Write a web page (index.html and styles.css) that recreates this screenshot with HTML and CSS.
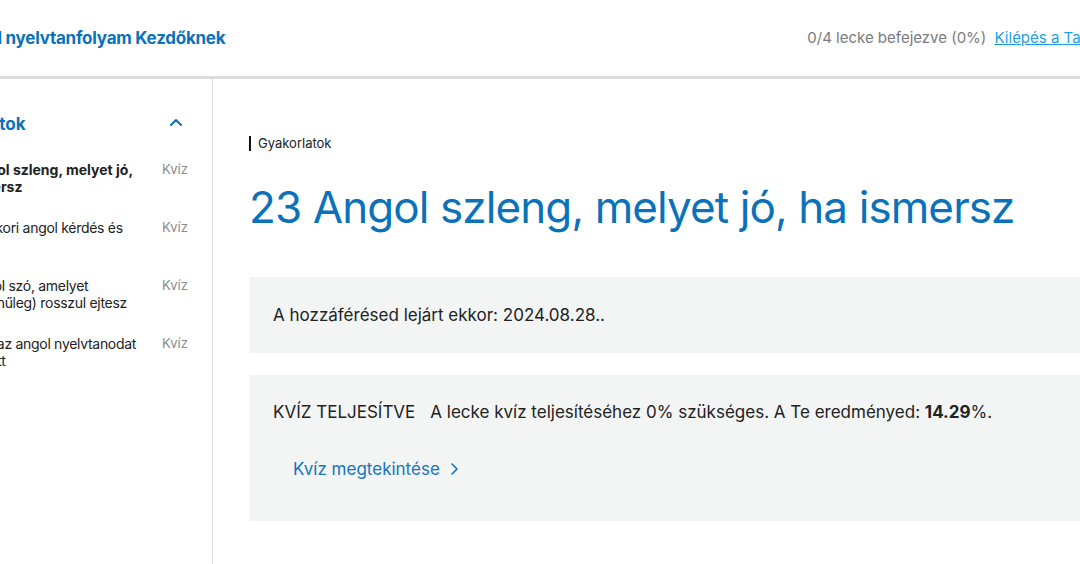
FILE: index.html
```html
<!DOCTYPE html>
<html lang="hu">
<head>
    <meta charset="UTF-8">
    <meta name="viewport" content="width=device-width, initial-scale=1.0">
    <title>23 Angol szleng, melyet jó, ha ismersz</title>
    <link rel="stylesheet" href="styles.css">
</head>
<body>

    <div class="page">
        <!-- Course header -->
        <header class="course-header">
            <div class="course-title">Angol nyelvtanfolyam Kezdőknek</div>
            <div class="course-progress">
                <span class="progress-text">0/4 lecke befejezve (0%)</span>
                <a href="#" class="exit-link">Kilépés a Tanfolyamból</a>
            </div>
        </header>

        <div class="layout">
            <!-- Lesson list -->
            <aside class="sidebar">
                <div class="section-head">
                    <span class="section-title">Gyakorlatok</span>
                    <svg class="chevron-up" width="14" height="8" viewBox="0 0 14 8">
                        <path d="M2 7 L7 2 L12 7" fill="none" stroke="#0b72b9" stroke-width="2" stroke-linecap="round" stroke-linejoin="round"/>
                    </svg>
                </div>
                <ul class="lessons">
                    <li class="lesson active">
                        <span class="lesson-name">23 Angol szleng, melyet jó, ha ismersz</span>
                        <span class="lesson-type">Kvíz</span>
                    </li>
                    <li class="lesson">
                        <span class="lesson-name">Mindenkori angol kérdés és válasz</span>
                        <span class="lesson-type">Kvíz</span>
                    </li>
                    <li class="lesson">
                        <span class="lesson-name">25 Angol szó, amelyet (valószínűleg) rosszul ejtesz</span>
                        <span class="lesson-type">Kvíz</span>
                    </li>
                    <li class="lesson">
                        <span class="lesson-name">Javítsd az angol nyelvtanodat kibővített</span>
                        <span class="lesson-type">Kvíz</span>
                    </li>
                </ul>
            </aside>

            <!-- Lesson content -->
            <main class="content">
                <div class="breadcrumb">Gyakorlatok</div>
                <h1 class="lesson-title">23 Angol szleng, melyet jó, ha ismersz</h1>

                <div class="notice">
                    A hozzáférésed lejárt ekkor: 2024.08.28..
                </div>

                <div class="notice quiz-result">
                    <p><span class="result-label">KVÍZ TELJESÍTVE</span>A lecke kvíz teljesítéséhez 0% szükséges. A Te eredményed: <strong>14.29</strong>%.</p>
                    <a href="#" class="quiz-link">Kvíz megtekintése
                        <svg width="10" height="14" viewBox="0 0 10 14">
                            <path d="M3 2 L8 7 L3 12" fill="none" stroke="#1474c0" stroke-width="1.6" stroke-linecap="round" stroke-linejoin="round"/>
                        </svg>
                    </a>
                </div>
            </main>
        </div>
    </div>

</body>
</html>
```

FILE: styles.css
```css
* {
    margin: 0;
    padding: 0;
    box-sizing: border-box;
}

body {
    font-family: 'Inter', 'Noto Sans', sans-serif;
    color: #222;
    background: #fff;
    overflow: hidden;
    height: 100vh;
}

.page {
    width: 1300px;
    margin-left: -100px;
}

/* Header */
.course-header {
    height: 79px;
    display: flex;
    justify-content: space-between;
    align-items: center;
    padding: 0 41px 1px 54px;
    border-bottom: 3px solid #dcdcdd;
}

.course-title {
    font-size: 17px;
    font-weight: 700;
    color: #0b72b9;
    letter-spacing: -0.25px;
}

.course-progress {
    font-size: 15px;
}

.progress-text {
    color: #7a7a80;
    margin-right: 4px;
}

.exit-link {
    color: #1b9fe3;
    text-decoration: underline;
}

/* Sidebar */
.layout {
    display: flex;
}

.sidebar {
    width: 313px;
    min-height: 490px;
    border-right: 1px solid #dcdcdd;
    padding: 33px 18px 0 25px;
}

.section-head {
    display: flex;
    justify-content: space-between;
    align-items: center;
    height: 24px;
    margin-bottom: 25px;
}

.section-title {
    font-size: 17px;
    font-weight: 700;
    color: #0b72b9;
}

.chevron-up {
    margin-right: 11px;
    margin-top: -4px;
}

.lessons {
    list-style: none;
    padding-left: 23px;
}

.lesson {
    display: flex;
    height: 58px;
    font-size: 14px;
    line-height: 17px;
}

.lesson-name {
    flex: 0 0 203px;
    color: #222;
    letter-spacing: -0.3px;
}

.lesson.active .lesson-name {
    font-weight: 700;
    letter-spacing: 0;
}

.lesson-type {
    margin-left: 11px;
    font-size: 13px;
    color: #8a8a8e;
}

/* Main content */
.content {
    flex: 1;
    padding: 57px 0 0 36px;
}

.breadcrumb {
    font-size: 13px;
    line-height: 15px;
    border-left: 2px solid #111;
    padding-left: 7px;
    color: #222;
}

.lesson-title {
    font-size: 44px;
    font-weight: 400;
    color: #0b72b9;
    line-height: 56px;
    margin: 28px 0 42px;
    letter-spacing: -0.9px;
}

.notice {
    background: #f3f5f5;
    font-size: 17px;
    line-height: 20px;
    padding: 28px 24px;
    margin-bottom: 22px;
}

.quiz-result {
    padding: 27px 24px 42px;
}

.result-label {
    margin-right: 15px;
}

.quiz-link {
    display: inline-flex;
    align-items: center;
    gap: 9px;
    margin: 37px 0 0 20px;
    color: #1474c0;
    text-decoration: none;
}
```
